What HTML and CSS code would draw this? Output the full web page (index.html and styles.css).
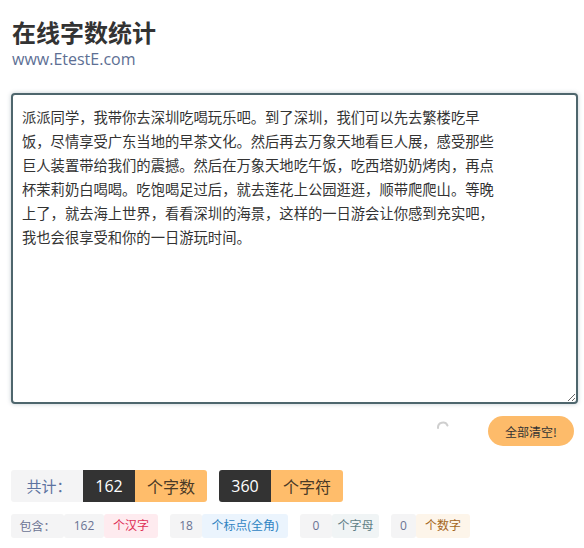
FILE: index.html
```html
<!DOCTYPE html>
<html lang="zh-CN">
<head>
<meta charset="utf-8">
<title>在线字数统计</title>
<link rel="stylesheet" href="styles.css">
</head>
<body>
<div class="page">
  <header class="head">
    <h1 class="title">在线字数统计</h1>
    <div class="site">www.EtestE.com</div>
  </header>
  <textarea class="editor">派派同学，我带你去深圳吃喝玩乐吧。到了深圳，我们可以先去繁楼吃早饭，尽情享受广东当地的早茶文化。然后再去万象天地看巨人展，感受那些巨人装置带给我们的震撼。然后在万象天地吃午饭，吃西塔奶奶烤肉，再点杯茉莉奶白喝喝。吃饱喝足过后，就去莲花上公园逛逛，顺带爬爬山。等晚上了，就去海上世界，看看深圳的海景，这样的一日游会让你感到充实吧，我也会很享受和你的一日游玩时间。</textarea>
  <div class="actions">
    <svg class="spinner" width="14" height="14" viewBox="0 0 14 14"><path d="M2 8 A5 5 0 0 1 11.5 5.5" fill="none" stroke="#cfcfcf" stroke-width="2" stroke-linecap="round"/></svg>
    <button class="clear">全部清空!</button>
  </div>
  <div class="totals">
    <div class="group">
      <span class="cap">共计：</span><span class="num">162</span><span class="unit">个字数</span>
    </div>
    <div class="group">
      <span class="num num-first">360</span><span class="unit">个字符</span>
    </div>
  </div>
  <div class="details">
    <div class="tag-group">
      <span class="t-cap">包含：</span><span class="t-num t-w40">162</span><span class="t-lab lab-han">个汉字</span>
    </div>
    <div class="tag-group">
      <span class="t-num t-w32">18</span><span class="t-lab lab-punc">个标点(全角)</span>
    </div>
    <div class="tag-group">
      <span class="t-num t-w32">0</span><span class="t-lab lab-letter">个字母</span>
    </div>
    <div class="tag-group">
      <span class="t-num t-w25">0</span><span class="t-lab lab-digit">个数字</span>
    </div>
  </div>
</div>
</body>
</html>
```

FILE: styles.css
```css
* { box-sizing: border-box; }
html, body { margin: 0; padding: 0; background: #fff; }
body {
  font-family: "Open Sans", "Noto Sans CJK SC", sans-serif;
  color: #333;
}
.page {
  padding: 18px 6px 0 11px;
}
.title {
  margin: 0;
  font-size: 24px;
  line-height: 28px;
  font-weight: 700;
  color: #333;
  padding-left: 1px;
  font-family: "Noto Sans CJK SC", sans-serif;
}
.site {
  margin-top: 3px;
  font-size: 16px;
  line-height: 20px;
  color: #5d6f94;
  padding-left: 1px;
}
.editor {
  display: block;
  margin-top: 24px;
  width: 567px;
  height: 311px;
  border: 2px solid #4e666d;
  border-radius: 4px;
  box-shadow: 0 0 4px rgba(120, 140, 150, 0.45);
  padding: 10px 75px 10px 9px;
  font-family: "Noto Sans CJK SC", sans-serif;
  font-size: 14.3px;
  line-height: 23.9px;
  color: #333;
  outline: none;
  resize: both;
  background: #fff;
}
.actions {
  display: flex;
  justify-content: flex-end;
  align-items: center;
  gap: 38px;
  margin-top: 12px;
  padding-right: 4px;
}
.spinner { display: block; margin-bottom: 8px; }
.clear {
  height: 30px;
  width: 86px;
  border: none;
  border-radius: 15px;
  background: #fdbb6a;
  color: #333;
  font-family: "Noto Sans CJK SC", sans-serif;
  font-size: 12px;
  padding: 0;
  cursor: pointer;
}
.totals {
  display: flex;
  gap: 12px;
  margin-top: 24px;
}
.group {
  display: flex;
  height: 32px;
  border-radius: 3px;
  overflow: hidden;
  font-size: 16px;
  line-height: 32px;
}
.group span { display: block; text-align: center; }
.cap {
  width: 72px;
  background: #f4f4f5;
  color: #5d73a0;
  font-family: "Noto Sans CJK SC", sans-serif;
  font-size: 15px;
  padding-left: 4px;
}
.num {
  width: 52px;
  background: #333;
  color: #fff;
}
.unit {
  width: 72px;
  background: #ffbd6b;
  color: #4a3a26;
  font-family: "Noto Sans CJK SC", sans-serif;
}
.details {
  display: flex;
  gap: 12px;
  margin-top: 12px;
}
.tag-group {
  display: flex;
  height: 24px;
  font-size: 12px;
  line-height: 24px;
}
.tag-group span { display: block; text-align: center; border-radius: 3px; }
.t-cap {
  width: 53px;
  background: #f4f4f5;
  color: #6b7393;
  font-family: "Noto Sans CJK SC", sans-serif;
}
.t-num {
  background: #f4f4f5;
  color: #6b7393;
}
.t-w40 { width: 40px; }
.t-w32 { width: 32px; }
.t-w25 { width: 25px; }
.t-lab { font-family: "Open Sans", "Noto Sans CJK SC", sans-serif; }
.lab-han { width: 54px; background: #feebef; color: #de2f57; }
.lab-punc { width: 86px; background: #ebf4fd; color: #2f84c2; }
.lab-letter { width: 47px; background: #f0f4f5; color: #5f7f86; }
.lab-digit { width: 54px; background: #fdf5ea; color: #a4661c; }
```
